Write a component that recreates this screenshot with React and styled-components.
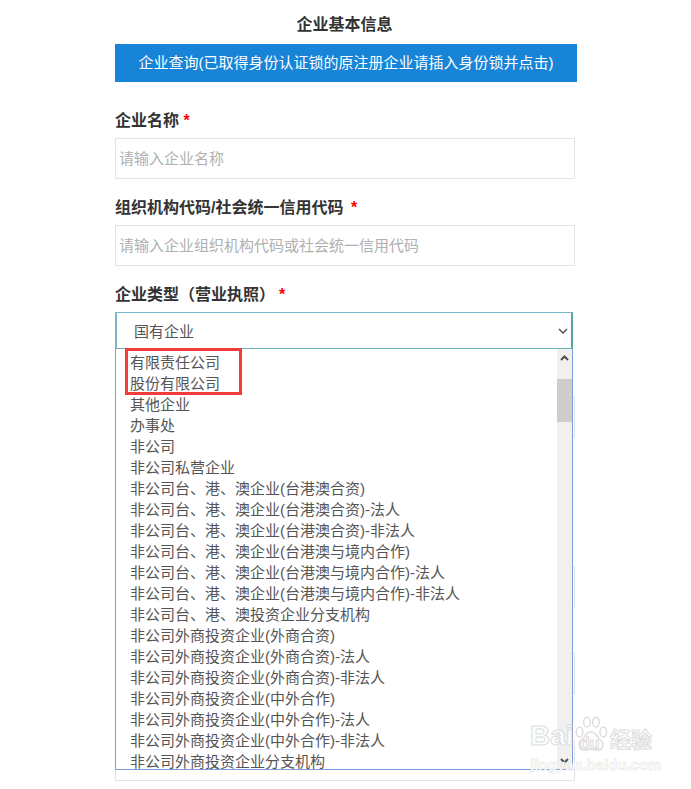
import React from "react";
import styled, { createGlobalStyle } from "styled-components";

const options = [
  "有限责任公司",
  "股份有限公司",
  "其他企业",
  "办事处",
  "非公司",
  "非公司私营企业",
  "非公司台、港、澳企业(台港澳合资)",
  "非公司台、港、澳企业(台港澳合资)-法人",
  "非公司台、港、澳企业(台港澳合资)-非法人",
  "非公司台、港、澳企业(台港澳与境内合作)",
  "非公司台、港、澳企业(台港澳与境内合作)-法人",
  "非公司台、港、澳企业(台港澳与境内合作)-非法人",
  "非公司台、港、澳投资企业分支机构",
  "非公司外商投资企业(外商合资)",
  "非公司外商投资企业(外商合资)-法人",
  "非公司外商投资企业(外商合资)-非法人",
  "非公司外商投资企业(中外合作)",
  "非公司外商投资企业(中外合作)-法人",
  "非公司外商投资企业(中外合作)-非法人",
  "非公司外商投资企业分支机构",
];

export default function App() {
  return (
    <>
      <GlobalStyle />
      <Page>
        <Header>
          <Heading>企业基本信息</Heading>
          <QueryBar>企业查询(已取得身份认证锁的原注册企业请插入身份锁并点击)</QueryBar>
        </Header>

        <Form>
          <Field>
            <Label>企业名称 <Star>*</Star></Label>
            <TextField>请输入企业名称</TextField>
          </Field>

          <Field>
            <Label>组织机构代码/社会统一信用代码 <Star $offset={3}>*</Star></Label>
            <TextField>请输入企业组织机构代码或社会统一信用代码</TextField>
          </Field>

          <Field>
            <Label>企业类型（营业执照）<Star $offset={4}>*</Star></Label>
            <SelectWrap>
              <SelectBox>
                国有企业
                <svg width="10" height="6" viewBox="0 0 10 6" fill="none" stroke="#555" strokeWidth="1.5">
                  <path d="M1 1l4 4 4-4" />
                </svg>
              </SelectBox>
              <Dropdown>
                <OptionList>
                  {options.map((o) => (
                    <Option key={o}>{o}</Option>
                  ))}
                </OptionList>
                <Scrollbar>
                  <ScrollArrow>
                    <svg width="9" height="6" viewBox="0 0 9 6" fill="none" stroke="#505050" strokeWidth="2">
                      <path d="M1 5l3.500-3.500L8 5" />
                    </svg>
                  </ScrollArrow>
                  <ScrollThumb />
                  <ScrollFill />
                  <ScrollArrow>
                    <svg width="9" height="6" viewBox="0 0 9 6" fill="none" stroke="#505050" strokeWidth="2">
                      <path d="M1 1l3.500 3.500L8 1" />
                    </svg>
                  </ScrollArrow>
                </Scrollbar>
                <Highlight />
              </Dropdown>
            </SelectWrap>
          </Field>
        </Form>

        <CoveredFields>
          <CoveredField />
          <CoveredField />
          <CoveredField />
          <CoveredField />
        </CoveredFields>

        <Watermark>
          <BrandRow>
            <WatermarkBrand>Bai</WatermarkBrand>
            <Paw>
              <svg width="36" height="39" viewBox="0 0 44 46" fill="#fff" stroke="#dcdcdc" strokeWidth="1.800">
                <ellipse cx="8" cy="20" rx="4" ry="6" />
                <ellipse cx="17" cy="8" rx="4" ry="6" />
                <ellipse cx="28" cy="8" rx="4" ry="6" />
                <ellipse cx="37" cy="20" rx="4" ry="6" />
                <path d="M22 20c-6 0-8 7-12 10-5 4-2 13 5 12 3 0 5-1 7-1s4 1 7 1c7 1 10-8 5-12-4-3-6-10-12-10z" />
              </svg>
              <WatermarkDu>du</WatermarkDu>
            </Paw>
            <WatermarkCn>经验</WatermarkCn>
          </BrandRow>
          <WatermarkUrl>jingyan.baidu.com</WatermarkUrl>
        </Watermark>
      </Page>
    </>
  );
}

const GlobalStyle = createGlobalStyle`
  html, body {
    margin: 0;
    padding: 0;
    background: #fff;
    overflow: hidden;
  }
  body {
    font-family: "Liberation Sans", "Noto Sans CJK SC", sans-serif;
  }
`;

const Page = styled.div`
  position: relative;
  width: 460px;
  height: 789px;
  margin-left: 115px;
  padding-top: 15px;
  box-sizing: border-box;
  display: flex;
  flex-direction: column;
`;

const Header = styled.div`
  display: flex;
  flex-direction: column;
  gap: 9px;
`;

const Heading = styled.div`
  text-align: center;
  font-size: 16px;
  line-height: 20px;
  font-weight: bold;
  color: #333;
  margin-left: -1px;
`;

const QueryBar = styled.div`
  width: 462px;
  height: 38px;
  background: #1784d8;
  color: #fff;
  font-size: 15px;
  line-height: 38px;
  text-align: center;
`;

const Form = styled.div`
  display: flex;
  flex-direction: column;
  gap: 19px;
  padding-top: 29px;
`;

const Field = styled.div`
  display: flex;
  flex-direction: column;
  gap: 7px;
`;

const Label = styled.div`
  font-size: 16px;
  line-height: 20px;
  font-weight: bold;
  color: #333;
  white-space: pre-wrap;
`;

const Star = styled.span`
  color: #f00;
  margin-left: ${(p) => p.$offset || 0}px;
`;

const TextField = styled.div`
  height: 41px;
  box-sizing: border-box;
  border: 1px solid #e3e3e3;
  padding-left: 3px;
  font-size: 15px;
  line-height: 39px;
  color: #b0b0b0;
  background: #fff;
`;

const SelectWrap = styled.div`
  position: relative;
  z-index: 2;
  width: 458px;
`;

const SelectBox = styled.div`
  height: 38px;
  box-sizing: border-box;
  display: flex;
  align-items: center;
  justify-content: space-between;
  padding: 0 3px 0 17px;
  border: 2px solid #6cb0b8;
  border-top: 1px solid #7ab4cf;
  border-left-color: #7ab4cf;
  border-right-color: #5aa59b;
  font-size: 15px;
  color: #555;
  background: #fff;
`;

const Dropdown = styled.div`
  position: absolute;
  left: 0;
  top: 37px;
  width: 458px;
  height: 421px;
  box-sizing: border-box;
  display: flex;
  border: 1px solid #7a9fdc;
  border-top: none;
  background: #fff;
`;

const OptionList = styled.div`
  flex: 1;
  overflow: hidden;
  padding-top: 3px;
`;

const Option = styled.div`
  height: 21px;
  line-height: 21px;
  padding-left: 14px;
  font-size: 15px;
  color: #555;
  white-space: nowrap;
`;

const Scrollbar = styled.div`
  width: 15px;
  display: flex;
  flex-direction: column;
  background: #f0f0f0;
`;

const ScrollArrow = styled.div`
  height: 17px;
  flex: none;
  display: flex;
  align-items: center;
  justify-content: center;
`;

const ScrollThumb = styled.div`
  height: 43px;
  margin-top: 13px;
  flex: none;
  background: #cdcdcd;
`;

const ScrollFill = styled.div`
  flex: 1;
`;

const Highlight = styled.div`
  position: absolute;
  left: 9px;
  top: -1px;
  width: 117px;
  height: 47px;
  box-sizing: border-box;
  border: 3px solid #f33b3b;
`;

const CoveredFields = styled.div`
  display: flex;
  flex-direction: column;
  gap: 46px;
  padding-top: 46px;
`;

const CoveredField = styled.div`
  height: 41px;
  flex: none;
  box-sizing: border-box;
  border: 1px solid #e3e3e3;

  &:nth-child(2) {
    margin-top: 83px;
  }
`;

const Watermark = styled.div`
  position: absolute;
  left: 415px;
  top: 715px;
  z-index: 3;
  display: flex;
  flex-direction: column;
  gap: 3px;
  color: #fff;
  font-weight: bold;
  -webkit-text-stroke: 1px #dcdcdc;
`;

const BrandRow = styled.div`
  display: flex;
  align-items: flex-end;
  height: 39px;
`;

const WatermarkBrand = styled.span`
  width: 43px;
  font-size: 28px;
  line-height: 32px;
  padding-bottom: 2px;
`;

const Paw = styled.div`
  position: relative;
  width: 36px;
  height: 39px;
  margin-right: 1px;

  svg {
    display: block;
  }
`;

const WatermarkDu = styled.span`
  position: absolute;
  left: 7px;
  bottom: 1px;
  font-size: 16px;
  line-height: 18px;
`;

const WatermarkCn = styled.span`
  font-size: 21px;
  line-height: 26px;
  padding-bottom: 1px;
`;

const WatermarkUrl = styled.span`
  font-size: 15px;
  line-height: 16px;
  white-space: nowrap;
  -webkit-text-stroke: 0.500px #e2e2e2;
`;
